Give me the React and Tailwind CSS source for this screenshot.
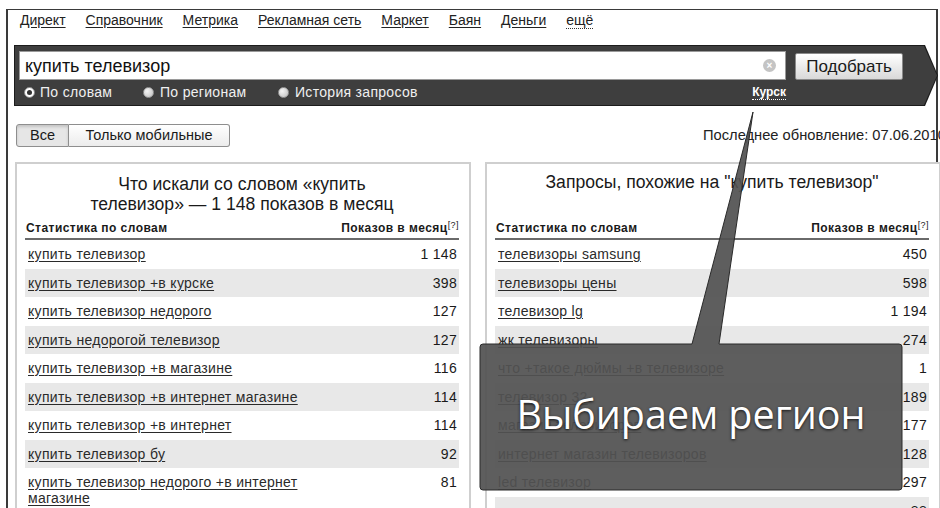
import React from "react";

const navLinks = ["Директ", "Справочник", "Метрика", "Рекламная сеть", "Маркет", "Баян", "Деньги"];

const leftRows = [
  ["купить телевизор", "1 148"],
  ["купить телевизор +в курске", "398"],
  ["купить телевизор недорого", "127"],
  ["купить недорогой телевизор", "127"],
  ["купить телевизор +в магазине", "116"],
  ["купить телевизор +в интернет магазине", "114"],
  ["купить телевизор +в интернет", "114"],
  ["купить телевизор бу", "92"],
  ["купить телевизор недорого +в интернет магазине", "81"],
];

const rightRows = [
  ["телевизоры samsung", "450"],
  ["телевизоры цены", "598"],
  ["телевизор lg", "1 194"],
  ["жк телевизоры", "274"],
  ["что +такое дюймы +в телевизоре", "1"],
  ["телевизор 32", "189"],
  ["магазин телевизоров", "177"],
  ["интернет магазин телевизоров", "128"],
  ["led телевизор", "297"],
  ["плазменные телевизоры", "88"],
];

function Radio({ checked }) {
  return checked ? (
    <span className="flex h-[11px] w-[11px] items-center justify-center rounded-full border border-[#888] bg-white">
      <span className="h-[5px] w-[5px] rounded-full bg-[#333]" />
    </span>
  ) : (
    <span className="h-[11px] w-[11px] rounded-full border border-[#999] bg-[radial-gradient(circle_at_35%_35%,#f4f4f4,#bdbdbd)]" />
  );
}

function Row({ text, count, shaded }) {
  return (
    <div
      className={
        "flex min-h-[28.5px] items-start justify-between pl-[3px] pr-[2px] pt-[6px] text-[14px] leading-[16px] tracking-[0.3px] " +
        (shaded ? "bg-[#e8e8e8]" : "")
      }
    >
      <a className="w-[310px] text-[#2a2a2a] underline underline-offset-2">{text}</a>
      <span className="text-[#1a1a1a]">{count}</span>
    </div>
  );
}

function Panel({ title, titleClass, rows }) {
  return (
    <div className="h-[360px] w-[456px] shrink-0 border-2 border-[#cfcfcf] bg-white pl-[8px] pr-[10px]">
      <div className={"h-[58px] text-center text-[17.6px] leading-[20px] text-[#1a1a1a] " + titleClass}>{title}</div>
      <div className="flex h-[18px] items-end justify-between border-b-2 border-[#6a6a6a] pb-[3px] pl-[1px] text-[12px] font-bold leading-[13px] tracking-[0.45px] text-[#1a1a1a]">
        <span>Статистика по словам</span>
        <span>
          Показов в месяц<sup className="text-[9px] font-normal">[?]</sup>
        </span>
      </div>
      {rows.map(([t, c], i) => (
        <Row key={i} text={t} count={c} shaded={i % 2 === 1} />
      ))}
    </div>
  );
}

export default function App() {
  return (
    <div className="relative h-[508px] w-[940px] overflow-hidden bg-white font-['Liberation_Sans',Arial,sans-serif]">
      {/* page frame */}
      <div className="ml-[6px] mt-[9px] h-[499px] w-[932px] border-l-2 border-r-2 border-t border-[#3a3a3a]">
        {/* service links */}
        <nav className="flex h-[35px] gap-[20px] pl-[12px] pt-[2px] text-[14px] leading-[16px] text-[#222]">
          {navLinks.map((l) => (
            <a key={l} className="underline underline-offset-2">
              {l}
            </a>
          ))}
          <a className="h-[17px] border-b border-dotted border-[#333]">ещё</a>
        </nav>

        {/* search bar */}
        <div className="ml-[6px] h-[61px] w-[924px] bg-[#1c1c1c] p-px [clip-path:polygon(0_0,calc(100%_-_13px)_0,100%_50%,calc(100%_-_13px)_100%,0_100%)]">
          <div className="flex h-full bg-[#3e3e3e] pl-[4px] pt-[5px] [clip-path:polygon(0_0,calc(100%_-_13px)_0,100%_50%,calc(100%_-_13px)_100%,0_100%)]">
            <div className="w-[767px]">
              <div className="flex h-[29px] items-center justify-between border border-[#9a9a9a] bg-white pl-[5px] pr-[9px]">
                <span className="text-[18px] leading-[20px] text-[#111]">купить телевизор</span>
                <span className="flex h-[13px] w-[13px] items-center justify-center rounded-full bg-[#c4c4c4] text-[10px] font-bold leading-none text-white">
                  ×
                </span>
              </div>
              <div className="flex h-[24px] items-center pl-[5px] text-[14px] tracking-[0.3px] text-[#f0f0f0]">
                <div className="flex w-[119px] items-center gap-[5px]">
                  <Radio checked />
                  <span>По словам</span>
                </div>
                <div className="flex w-[135px] items-center gap-[6px]">
                  <Radio />
                  <span>По регионам</span>
                </div>
                <div className="flex items-center gap-[6px]">
                  <Radio />
                  <span>История запросов</span>
                </div>
                <span className="ml-auto border-b border-dotted border-white text-[12px] font-bold leading-[14px] tracking-normal text-white">
                  Курск
                </span>
              </div>
            </div>
            <button className="ml-[9px] mt-[2px] h-[27px] w-[108px] rounded-[2px] border border-[#8a8a8a] bg-gradient-to-b from-white to-[#d9d9d9] text-[17px] text-[#1a1a1a]">
              Подобрать
            </button>
          </div>
        </div>

        {/* filter + date */}
        <div className="ml-[8px] mt-[18px] flex items-center">
          <div className="flex h-[23px] text-[14.5px] text-[#1a1a1a]">
            <span className="flex w-[53px] items-center justify-center rounded-l-[3px] border border-[#8e8e8e] bg-[#e6e6e6] shadow-[inset_0_2px_3px_rgba(0,0,0,0.15)]">
              Все
            </span>
            <span className="flex w-[161px] items-center justify-center rounded-r-[3px] border border-l-0 border-[#8e8e8e] bg-gradient-to-b from-white to-[#ececec]">
              Только мобильные
            </span>
          </div>
          <span className="ml-[473px] shrink-0 whitespace-nowrap text-[14.7px] text-[#222]">
            Последнее обновление: 07.06.2010
          </span>
        </div>

        {/* results */}
        <div className="ml-[7px] mt-[15px] flex gap-[14px]">
          <Panel
            title={
              <>
                Что искали со словом «купить
                <br />
                телевизор» — 1 148 показов в месяц
              </>
            }
            titleClass="pt-[10px]"
            rows={leftRows}
          />
          <Panel title={'Запросы, похожие на "купить телевизор"'} titleClass="pt-[8px]" rows={rightRows} />
        </div>
      </div>

      {/* callout bubble */}
      <svg className="pointer-events-none absolute left-0 top-0" width="940" height="508" viewBox="0 0 940 508">
        <path
          d="M483 344 L692 344 L753 112 L719 344 L899 344 Q902 344 902 347 L902 487 Q902 490 899 490 L483 490 Q480 490 480 487 L480 347 Q480 344 483 344 Z"
          fill="#525252"
          fillOpacity="0.93"
          stroke="#2a2a2a"
          strokeWidth="1"
        />
      </svg>
      <div className="absolute left-[480px] top-[344px] flex h-[146px] w-[422px] items-center justify-center pb-[4px]">
        <span className="font-['Open_Sans',sans-serif] text-[39.5px] leading-none text-white [text-shadow:0_1px_3px_rgba(0,0,0,0.8)]">
          Выбираем регион
        </span>
      </div>
    </div>
  );
}
